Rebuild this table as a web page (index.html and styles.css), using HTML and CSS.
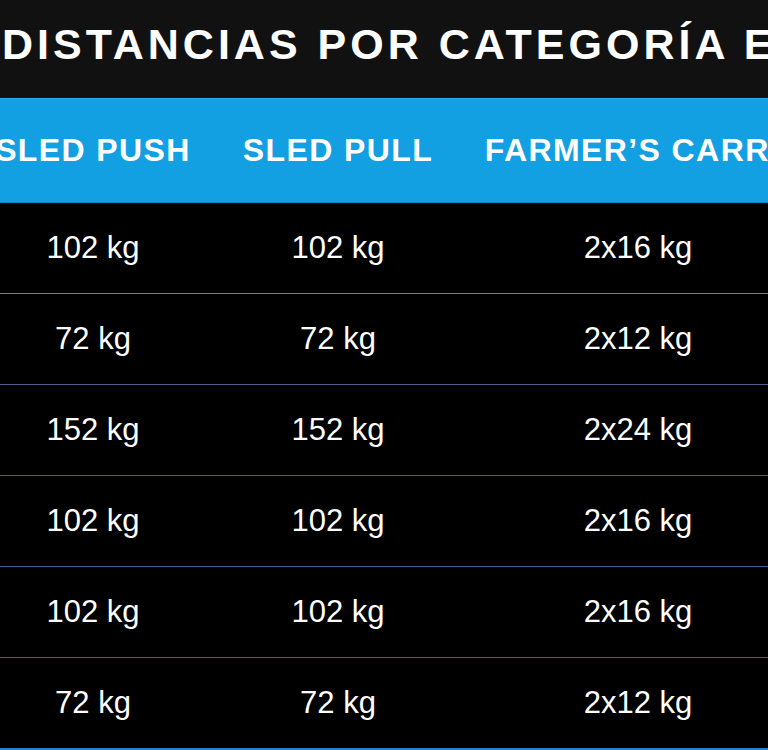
FILE: index.html
```html
<!DOCTYPE html>
<html lang="es">
<head>
<meta charset="utf-8">
<title>Distancias por categoría</title>
<link rel="stylesheet" href="styles.css">
</head>
<body>
<div class="page">
  <h1 class="title">DISTANCIAS POR CATEGORÍA EN HYROX</h1>
  <table class="weights">
    <colgroup>
      <col class="c1">
      <col class="c2">
      <col class="c3">
    </colgroup>
    <thead>
      <tr>
        <th><span class="hd">SLED PUSH</span></th>
        <th><span class="hd">SLED PULL</span></th>
        <th><span class="hd">FARMER’S CARRY</span></th>
      </tr>
    </thead>
    <tbody>
      <tr class="r1"><td>102 kg</td><td>102 kg</td><td>2x16 kg</td></tr>
      <tr class="r2"><td>72 kg</td><td>72 kg</td><td>2x12 kg</td></tr>
      <tr class="r3"><td>152 kg</td><td>152 kg</td><td>2x24 kg</td></tr>
      <tr class="r4"><td>102 kg</td><td>102 kg</td><td>2x16 kg</td></tr>
      <tr class="r5"><td>102 kg</td><td>102 kg</td><td>2x16 kg</td></tr>
      <tr class="r6"><td>72 kg</td><td>72 kg</td><td>2x12 kg</td></tr>
    </tbody>
  </table>
</div>
</body>
</html>
```
FILE: styles.css
```css
html, body {
  margin: 0;
  padding: 0;
  background: #000;
  overflow: hidden;
}
.page {
  width: 768px;
  height: 750px;
  overflow: hidden;
  font-family: "Liberation Sans", Arial, sans-serif;
  color: #fff;
}
.title {
  margin: 0;
  box-sizing: border-box;
  height: 98px;
  padding: 20px 0 0 2px;
  background: #111111;
  font-size: 43px;
  line-height: 48px;
  font-weight: 700;
  letter-spacing: 4px;
  white-space: nowrap;
  color: #fff;
}
.weights {
  border-collapse: collapse;
  table-layout: fixed;
  width: 786px;
}
.c1 { width: 186px; }
.c2 { width: 304px; }
.c3 { width: 296px; }
.weights th {
  background: #12a0e2;
  height: 103px;
  padding: 0;
  font-size: 32px;
  font-weight: 700;
  letter-spacing: 1.4px;
  text-align: center;
  white-space: nowrap;
  vertical-align: middle;
  border-top: 1px solid #2cb0ec;
  border-bottom: 1px solid #0a86c0;
}
.hd {
  display: inline-block;
  margin: 0 -30px;
}
.weights td {
  height: 90px;
  padding: 0;
  font-size: 31px;
  text-align: center;
  vertical-align: middle;
  white-space: nowrap;
  border-bottom: 1px solid #3d5f9e;
}
.weights .r1 td { border-bottom-color: #1a9fd6; }
.weights .r2 td { border-bottom-color: #55588a; }
.weights .r6 td { border-bottom: 2px solid #2a7fd0; }
```
